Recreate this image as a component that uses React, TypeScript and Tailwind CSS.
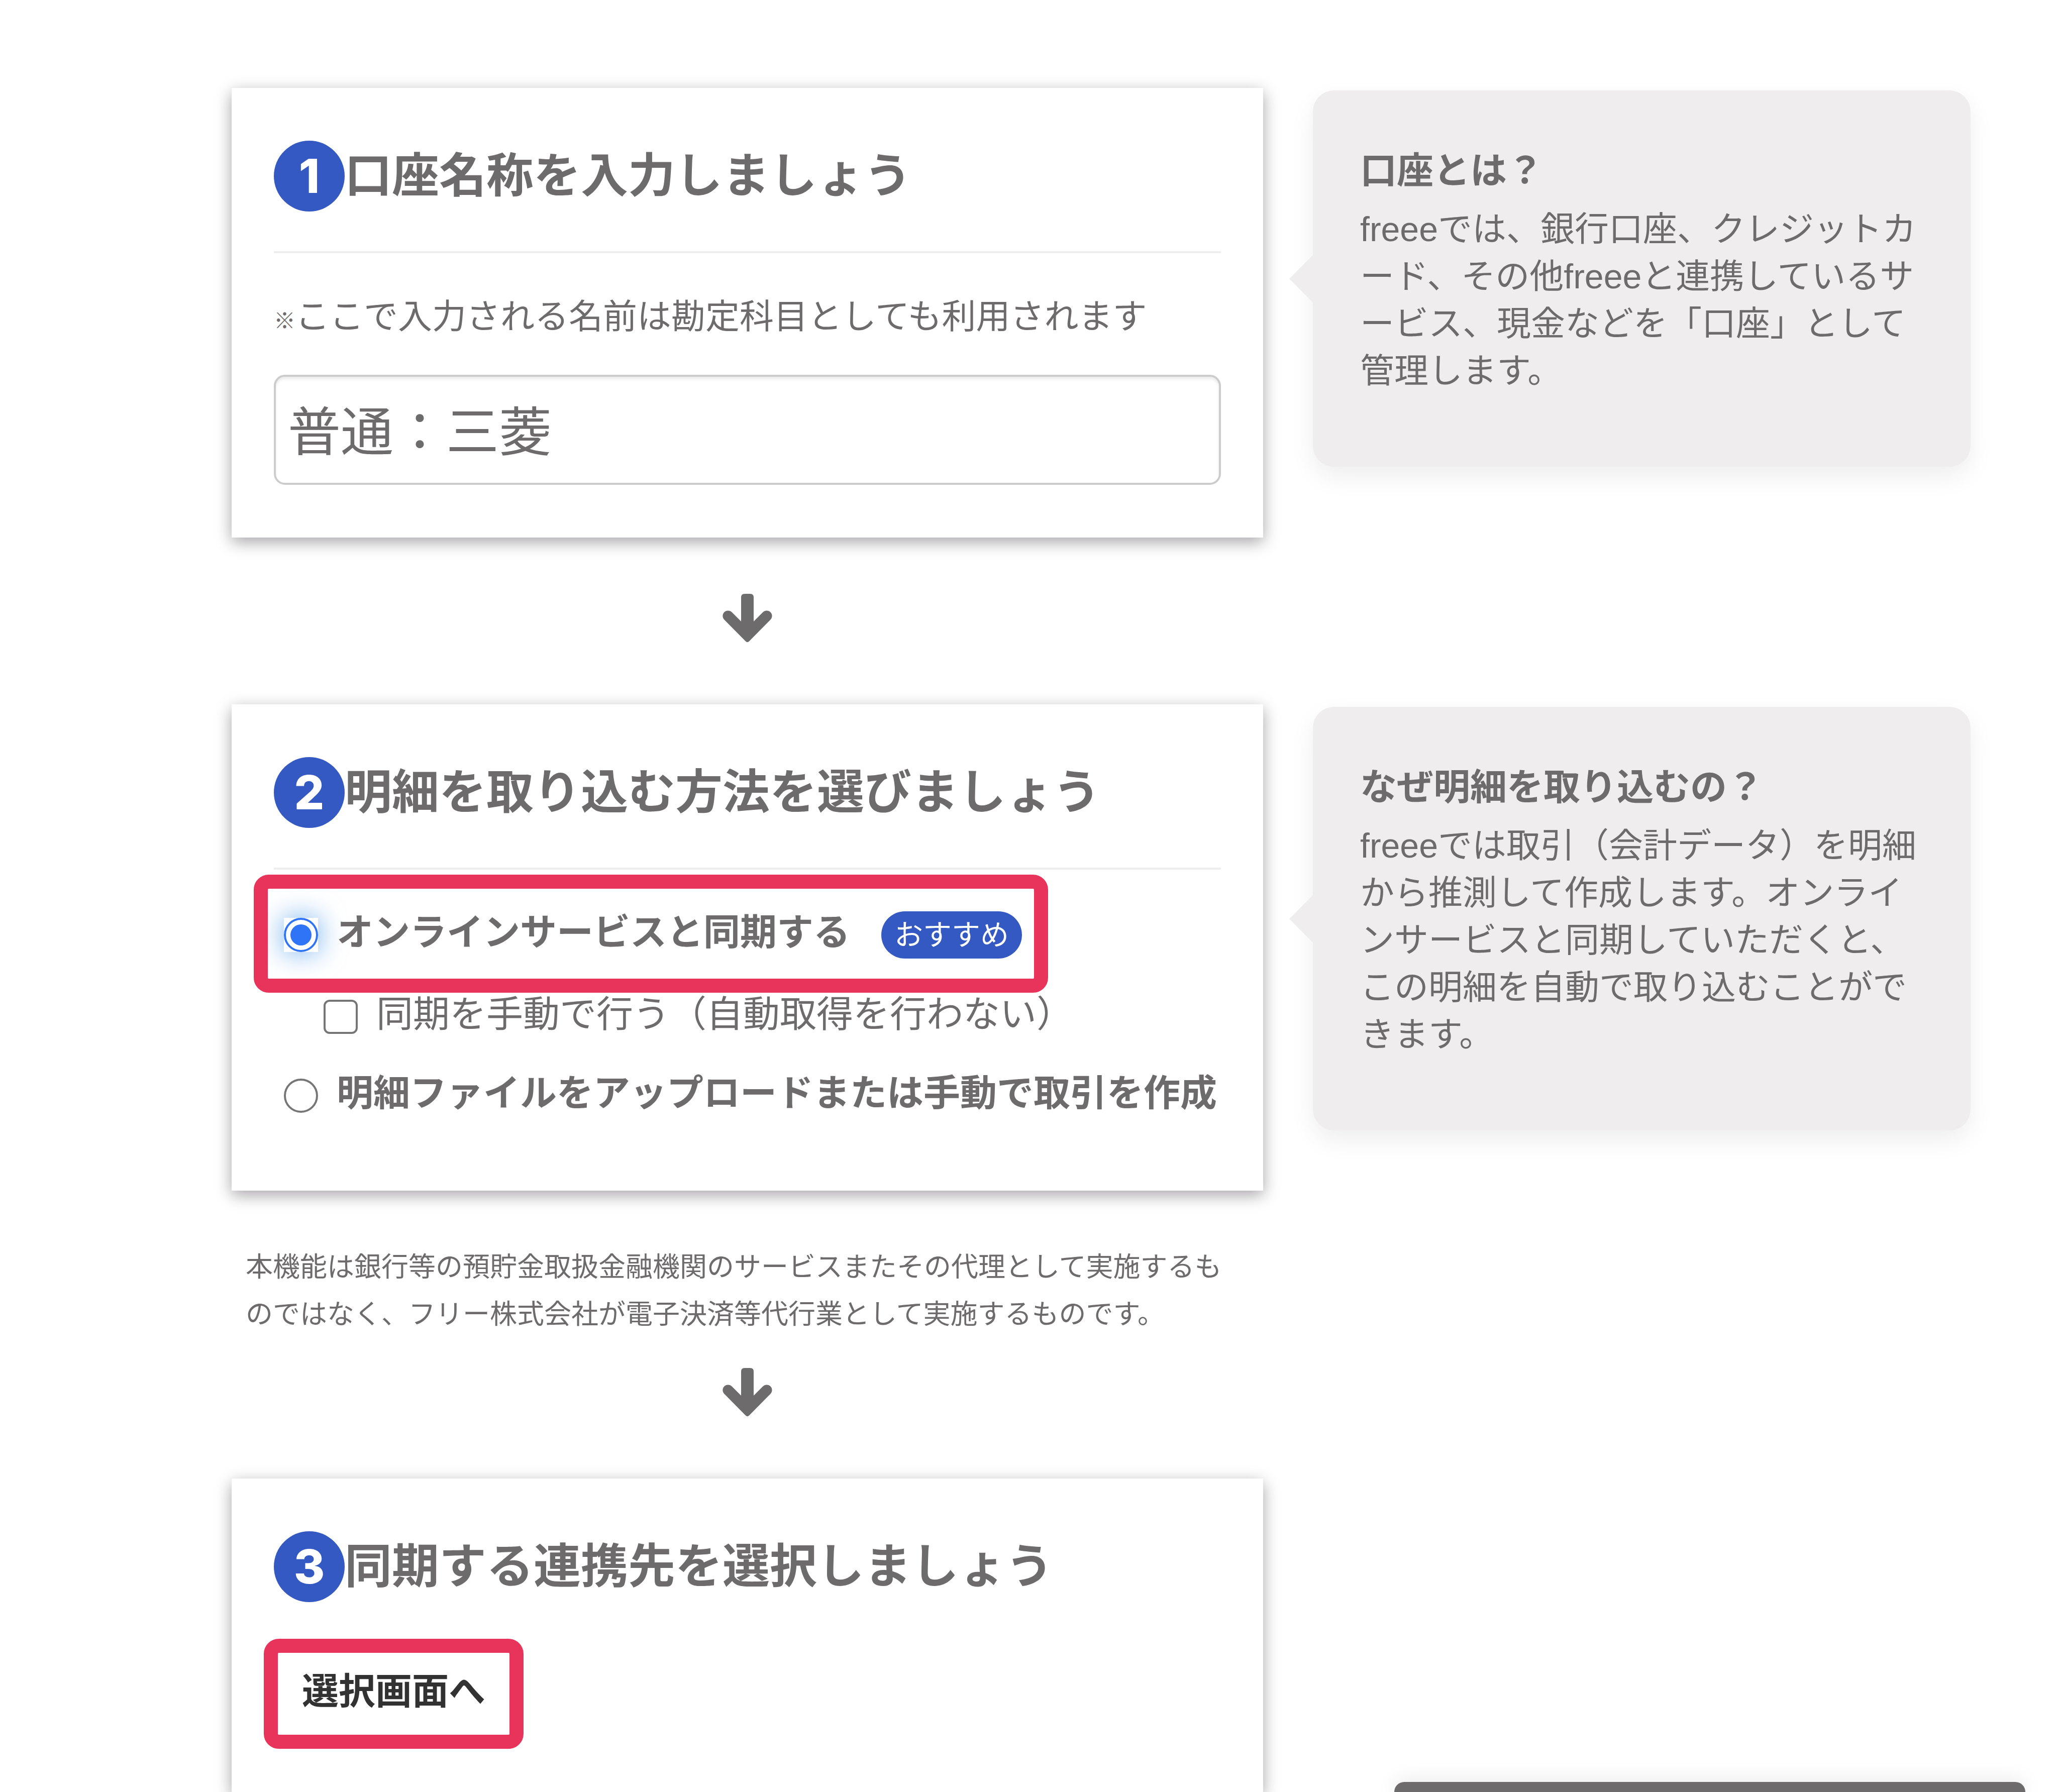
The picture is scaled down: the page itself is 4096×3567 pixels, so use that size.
import React, { useState } from 'react';

interface HelpProps {
  title: string;
  text: string;
}

interface StepHeaderProps {
  no: number;
  title: string;
}

const helps: HelpProps[] = [
  {
    title: '口座とは？',
    text: 'freeeでは、銀行口座、クレジットカード、その他freeeと連携しているサービス、現金などを「口座」として管理します。',
  },
  {
    title: 'なぜ明細を取り込むの？',
    text: 'freeeでは取引（会計データ）を明細から推測して作成します。オンラインサービスと同期していただくと、この明細を自動で取り込むことができます。',
  },
];

const cardClass =
  'bg-white px-[84px] pt-[105px] shadow-[0_9px_30px_rgba(12,0,12,0.36)]';
const radioClass =
  'block size-[68px] appearance-none rounded-full border-4 border-[#767676] bg-white bg-clip-content p-[9px] checked:border-[#2f73f6] checked:bg-[#2f73f6]';
const labelClass = 'ml-[37px] pb-[10px] leading-[94px]';
const highlightClass =
  'pointer-events-none absolute rounded-[30px] border-[28px] border-[#e8345b]';

const StepHeader: React.FC<StepHeaderProps> = ({ no, title }) => (
  <h2 className="flex items-center text-[94px] leading-[141px] font-bold">
    <span className="flex size-[141px] shrink-0 items-center justify-center rounded-full bg-[#3559c2] font-['Inter',sans-serif] font-extrabold text-white">
      {no}
    </span>
    {title}
  </h2>
);

const Arrow: React.FC = () => (
  <div className="flex justify-center pb-[123px]">
    <svg viewBox="0 0 101 97" className="h-[97px] w-[101px] fill-[#6d6b6c]" aria-hidden="true">
      <path d="M38 7 Q38 0 45 0 H56 Q63 0 63 7 V55 L81.5 36.5 A10.6 10.6 0 0 1 96.5 51.5 L54 94.5 Q50.5 98 47 94.5 L4.5 51.5 A10.6 10.6 0 0 1 19.5 36.5 L38 55 Z" />
    </svg>
  </div>
);

const Help: React.FC<HelpProps> = ({ title, text }) => (
  <aside className="relative mt-[5px] self-start rounded-[42px] bg-[#efedee] px-[94px] pt-[113px] pb-[144px] shadow-[0_20px_50px_rgba(0,0,0,0.07)]">
    <svg
      viewBox="0 0 47 94"
      className="absolute top-1/2 right-full h-[94px] w-[47px] -translate-y-1/2 fill-[#efedee]"
      aria-hidden="true"
    >
      <path d="M47 0 L0 47 L47 94 Z" />
    </svg>
    <h3 className="mb-[22px] text-[73px] leading-[94px] font-bold">{title}</h3>
    <p className="text-[68px] leading-[94px] [line-break:anywhere]">{text}</p>
  </aside>
);

const App: React.FC = () => {
  const [name, setName] = useState('普通：三菱');
  const [method, setMethod] = useState('online');
  const [manual, setManual] = useState(false);

  return (
    <div
      lang="ja"
      className="flex min-h-screen flex-col overflow-hidden bg-white pt-[175px] pr-[174px] pl-[461px] font-['Liberation_Sans','Noto_Sans_CJK_JP',sans-serif] text-[#6d6b6c]"
    >
      <main className="grid flex-1 grid-cols-[2053fr_1309fr] grid-rows-[auto_auto_1fr] gap-x-[99px]">
        <div>
          <section className={`${cardClass} pb-[105px]`}>
            <StepHeader no={1} title="口座名称を入力しましょう" />
            <hr className="mt-[79px] border-t-4 border-[#eeeeee]" />
            <label htmlFor="account" className="mt-[79px] block text-[68px] leading-[94px]">
              <span className="text-[43px] leading-none font-bold">※</span>
              ここで入力される名前は勘定科目としても利用されます
            </label>
            <input
              id="account"
              type="text"
              value={name}
              onChange={(e) => setName(e.target.value)}
              className="mt-[69px] block h-[219px] w-full rounded-[22px] border-4 border-[#cccccc] bg-white px-[24px] pb-[10px] text-[105px] shadow-[inset_0_5px_5px_rgba(0,0,0,0.075)] outline-none"
            />
          </section>
          <div className="pt-[112px]">
            <Arrow />
          </div>
        </div>
        <Help {...helps[0]} />

        <div>
          <section className={`${cardClass} pb-[142px]`}>
            <StepHeader no={2} title="明細を取り込む方法を選びましょう" />
            <hr className="mt-[79px] border-t-4 border-[#eeeeee]" />
            <div className="relative mt-[83px] ml-[20px] flex h-[94px] w-fit items-center text-[73px] font-bold whitespace-nowrap">
              <span className="bg-white shadow-[0_0_50px_4px_rgba(62,145,232,0.6)]">
                <input
                  id="online"
                  type="radio"
                  name="method"
                  checked={method === 'online'}
                  onChange={() => setMethod('online')}
                  className={radioClass}
                />
              </span>
              <label htmlFor="online" className={labelClass}>
                オンラインサービスと同期する
              </label>
              <span className="ml-[62px] rounded-full bg-[#3559c2] px-[26px] text-[57px] leading-[94px] font-normal text-white">
                おすすめ
              </span>
              <span className={`${highlightClass} -top-[73px] -right-[52px] -bottom-[68px] -left-[60px]`} />
            </div>
            <div className="mt-[69px] ml-[99px] flex h-[94px] items-center text-[73px] whitespace-nowrap">
              <input
                id="manual"
                type="checkbox"
                checked={manual}
                onChange={(e) => setManual(e.target.checked)}
                className="size-[68px] appearance-none rounded-[12px] border-4 border-[#767676] bg-white bg-clip-content p-[9px] checked:bg-[#2f73f6]"
              />
              <label htmlFor="manual" className={labelClass}>
                同期を手動で行う（自動取得を行わない）
              </label>
            </div>
            <div className="mt-[63px] ml-[20px] flex h-[94px] items-center text-[73px] font-bold whitespace-nowrap">
              <input
                id="upload"
                type="radio"
                name="method"
                checked={method === 'upload'}
                onChange={() => setMethod('upload')}
                className={radioClass}
              />
              <label htmlFor="upload" className={labelClass}>
                明細ファイルをアップロードまたは手動で取引を作成
              </label>
            </div>
          </section>
          <p className="pt-[105px] pr-[56px] pb-[60px] pl-[28px] text-[54px] leading-[94px]">
            本機能は銀行等の預貯金取扱金融機関のサービスまたその代理として実施するものではなく、フリー株式会社が電子決済等代行業として実施するものです。
          </p>
          <Arrow />
        </div>
        <Help {...helps[1]} />

        <section className={cardClass}>
          <StepHeader no={3} title="同期する連携先を選択しましょう" />
          <button
            type="button"
            className="relative mt-[131px] ml-[56px] block text-[73px] leading-[94px] font-bold text-[#323232]"
          >
            選択画面へ
            <span className={`${highlightClass} -top-[58px] -right-[76px] -bottom-[67px] -left-[76px]`} />
          </button>
        </section>
      </main>

      {/* top edge of the docked help panel */}
      <div className="fixed right-[65px] bottom-0 h-[20px] w-[1256px] rounded-t-[20px] bg-[#6d6b6c] shadow-[0_0_42px_rgba(0,0,0,0.14)]" />
    </div>
  );
};

export default App;
